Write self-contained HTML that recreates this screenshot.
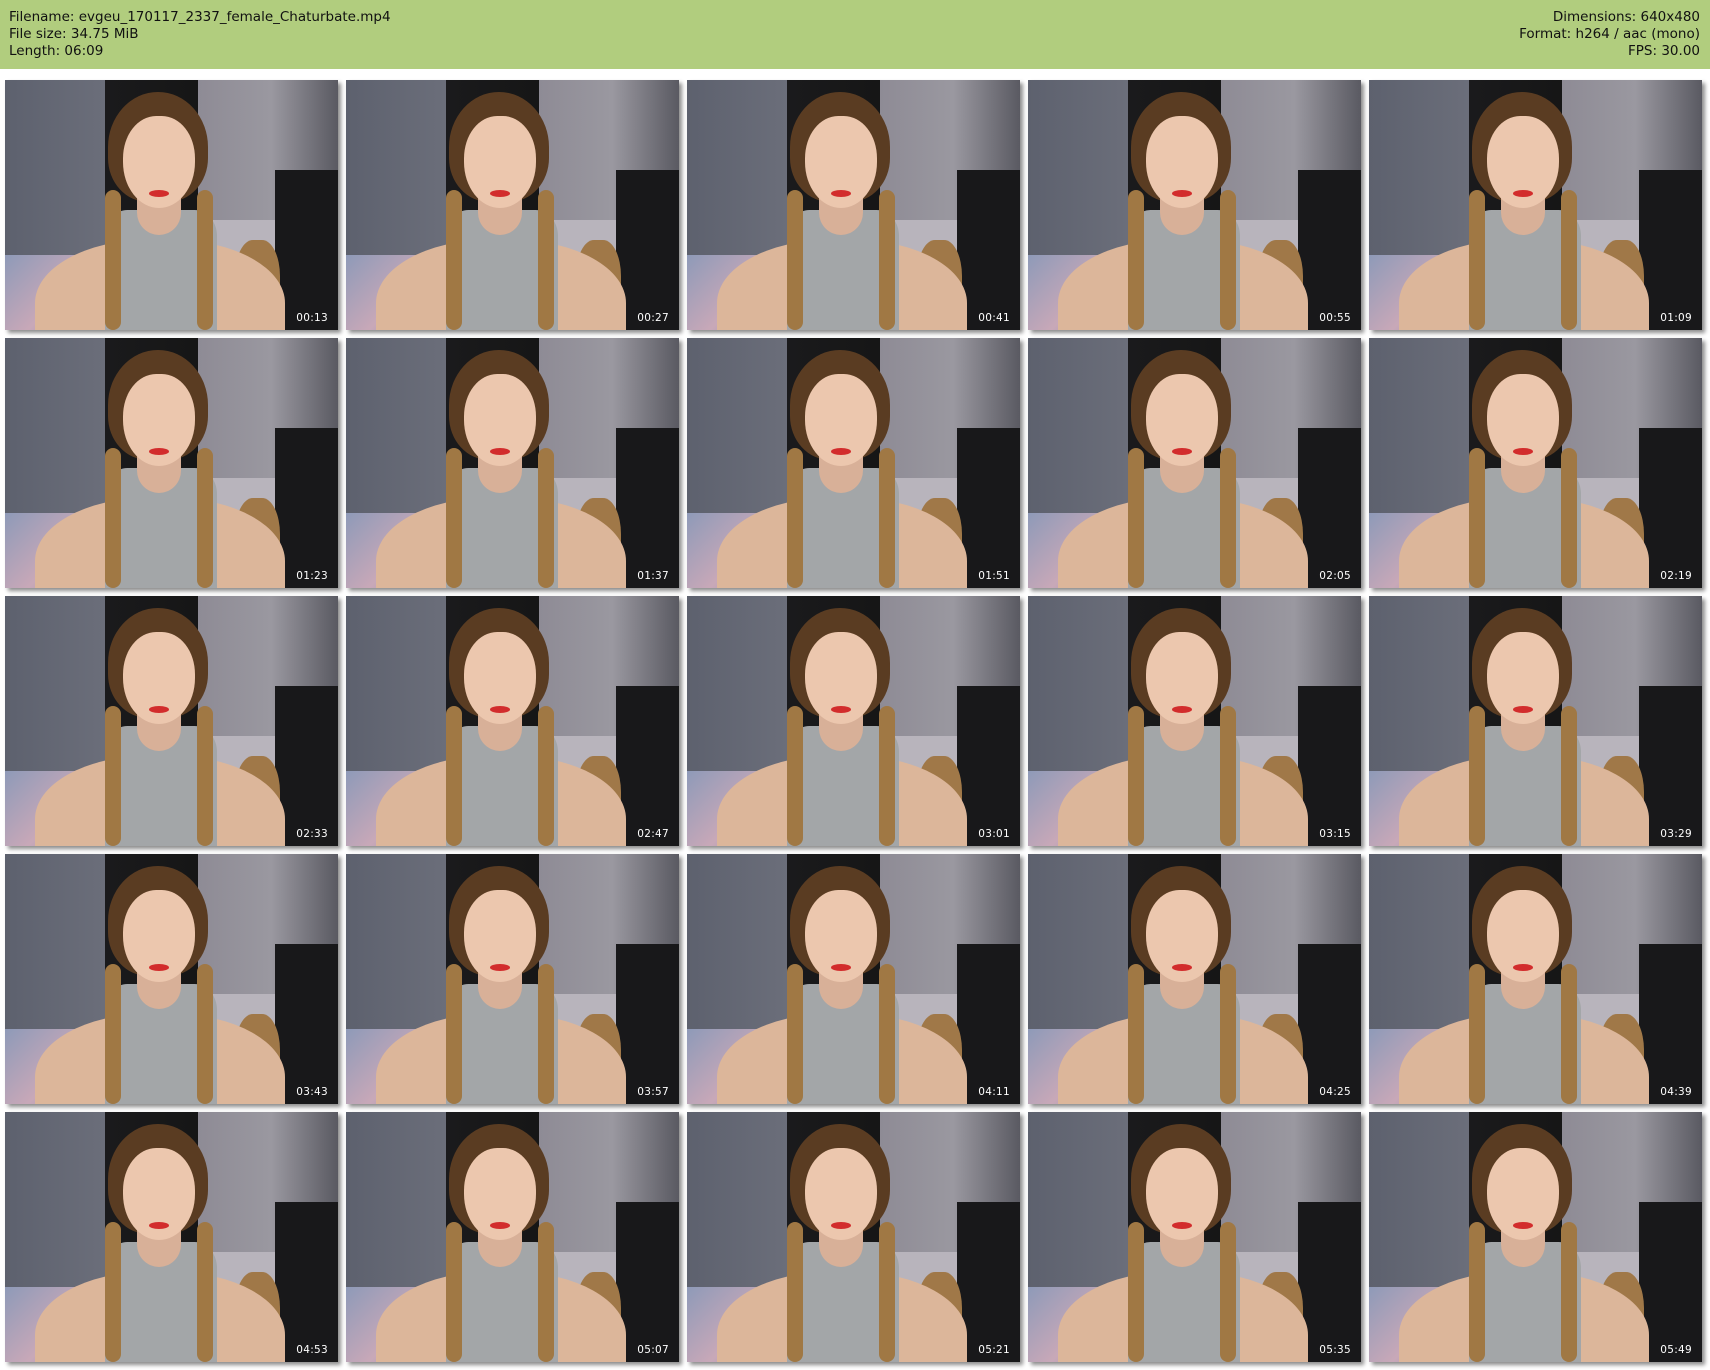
<!DOCTYPE html>
<html><head><meta charset="utf-8"><style>
*{margin:0;padding:0;box-sizing:border-box}
body{width:1710px;height:1370px;background:#fff;position:relative;overflow:hidden;font-family:"DejaVu Sans","Liberation Sans",sans-serif}
.hdr{position:absolute;left:0;top:0;width:1710px;height:69px;background:#b1cd7e;color:#111;font-size:13.5px;line-height:17px}
.l{position:absolute;left:9px;top:9px}
.r{position:absolute;right:10px;top:9px;text-align:right}
.t{position:absolute;width:333px;height:250px;overflow:hidden;box-shadow:3px 3px 4px rgba(0,0,0,.45);
background:linear-gradient(90deg,#5d616e 0,#6b6e7a 30%,#1a1a1c 30%,#161616 58%,#8e8b95 58%,#9a98a0 80%,#5a5a62 100%)}
.t div{position:absolute}
.bed{left:0;top:175px;width:120px;height:75px;background:linear-gradient(135deg,#8e9ab8,#c8a8b8 50%,#7e88aa)}
.bed2{left:195px;top:140px;width:85px;height:40px;background:#b8b4bc}
.chair{left:270px;top:90px;width:63px;height:160px;background:#18181a}
.chairb{left:230px;top:160px;width:45px;height:90px;background:#a07848;border-radius:40% 40% 0 0}
.hair{left:103px;top:12px;width:100px;height:110px;background:#5a3c22;border-radius:50% 50% 40% 40%}
.arms{left:30px;top:160px;width:250px;height:140px;background:#dcb69a;border-radius:45% 45% 0 0}
.top{left:100px;top:130px;width:112px;height:130px;background:#a3a6a8;border-radius:20% 20% 0 0}
.neck{left:132px;top:110px;width:44px;height:45px;background:#d8b098;border-radius:0 0 50% 50%}
.face{left:118px;top:36px;width:72px;height:92px;background:#ecc7ae;border-radius:46% 46% 50% 50%}
.braid1{left:100px;top:110px;width:16px;height:140px;background:#a07844;border-radius:8px}
.braid2{left:192px;top:110px;width:16px;height:140px;background:#a07844;border-radius:8px}
.lip{left:144px;top:110px;width:20px;height:7px;background:#d22c2c;border-radius:50%}
.ts{right:10px;bottom:6px;color:#fff;font-size:10.5px;letter-spacing:.3px}
</style></head><body>
<div class="hdr"><div class="l">Filename: evgeu_170117_2337_female_Chaturbate.mp4<br>File size: 34.75 MiB<br>Length: 06:09</div>
<div class="r">Dimensions: 640x480<br>Format: h264 / aac (mono)<br>FPS: 30.00</div></div>
<div id="g"></div>
<script>
var ts=["00:13","00:27","00:41","00:55","01:09","01:23","01:37","01:51","02:05","02:19","02:33","02:47","03:01","03:15","03:29","03:43","03:57","04:11","04:25","04:39","04:53","05:07","05:21","05:35","05:49"];
var h="";
for(var i=0;i<25;i++){var x=5+(i%5)*341,y=80+Math.floor(i/5)*258;
h+='<div class="t" style="left:'+x+'px;top:'+y+'px"><div class="bed"></div><div class="bed2"></div><div class="chair"></div><div class="chairb"></div><div class="arms"></div><div class="top"></div><div class="hair"></div><div class="neck"></div><div class="face"></div><div class="braid1"></div><div class="braid2"></div><div class="lip"></div><div class="ts">'+ts[i]+'</div></div>';}
document.getElementById("g").innerHTML=h;
</script>
</body></html>
